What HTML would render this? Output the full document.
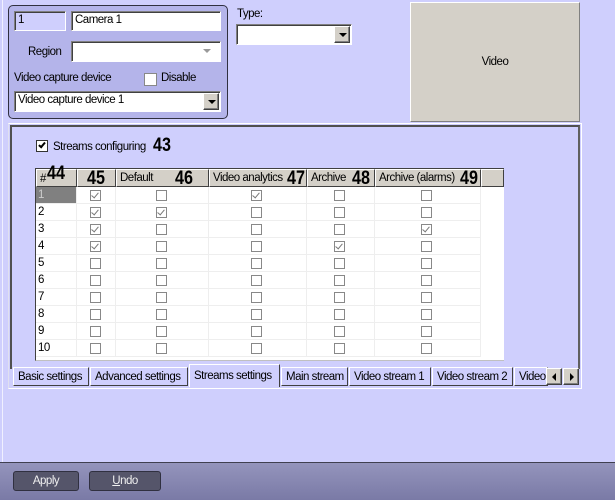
<!DOCTYPE html>
<html><head><style>
*{margin:0;padding:0;box-sizing:border-box}
body{width:615px;height:500px;background:#cfcffd;font-family:"Liberation Sans",sans-serif;font-size:11.5px;color:#000;position:relative;overflow:hidden;letter-spacing:-0.5px}
.a{position:absolute}
.edit{position:absolute;background:#fff;border-top:1px solid #808080;border-left:1px solid #808080;border-right:1px solid #fff;border-bottom:1px solid #fff;box-shadow:inset 1px 1px 0 #404040;padding:2px 3px;white-space:nowrap}
.btn{position:absolute;background:#d4d0c8;border:1px solid;border-color:#fff #404040 #404040 #fff;box-shadow:inset -1px -1px 0 #808080}
.tri{position:absolute;left:4px;top:6px;width:0;height:0;border-left:4px solid transparent;border-right:4px solid transparent;border-top:4px solid #000}
.cb{position:absolute;width:11px;height:11px;border:1px solid #888;background:#fff}
.cb.k::after{content:"";position:absolute;left:2px;top:0px;width:3px;height:6px;border:solid #777;border-width:0 1px 1px 0;transform:rotate(40deg)}
.big{font-weight:bold;font-size:19px;position:absolute;letter-spacing:0;transform:scaleX(0.85);transform-origin:left}
.hd{position:absolute;top:0;height:18px;background:#d4d0c8;border-right:1px solid #404040;border-bottom:1px solid #404040;border-left:1px solid #fff;border-top:1px solid #fff;padding:2px 3px;white-space:nowrap}
.tab{position:absolute;top:367px;height:19px;background:#cfcffd;border:1px solid;border-color:#fff #404040 #404040 #fff;padding:3px 4px;white-space:nowrap}
</style></head><body>
<div class="a" style="left:2px;top:0;width:1px;height:462px;background:#f0f0ff"></div>
<div class="a" style="left:8px;top:5px;width:220px;height:114px;background:#b4b4ea;border:1px solid #303040;border-radius:5px"></div>
<div class="edit" style="left:14px;top:11px;width:52px;height:20px;background:#cfcffd">1</div>
<div class="edit" style="left:71px;top:11px;width:150px;height:20px">Camera 1</div>
<div class="a" style="left:28px;top:46px">Region</div>
<div class="edit" style="left:71px;top:41px;width:150px;height:21px;background:#fff"></div>
<div class="a" style="left:203px;top:49px;width:0;height:0;border-left:4px solid transparent;border-right:4px solid transparent;border-top:4px solid #999"></div>
<div class="a" style="left:14px;top:72px">Video capture device</div>
<div class="cb" style="left:144px;top:73px;width:13px;height:13px"></div>
<div class="a" style="left:161px;top:72px">Disable</div>
<div class="edit" style="left:14px;top:91px;width:207px;height:21px">Video capture device 1</div>
<div class="btn" style="left:203px;top:93px;width:16px;height:17px"><div class="tri"></div></div>
<div class="a" style="left:237px;top:8px">Type:</div>
<div class="edit" style="left:236px;top:24px;width:116px;height:21px"></div>
<div class="btn" style="left:334px;top:26px;width:16px;height:17px"><div class="tri"></div></div>
<div class="a" style="left:410px;top:2px;width:170px;height:120px;background:#d4d0c8;border:1px solid;border-color:#fff #808080 #808080 #fff;text-align:center;line-height:118px">Video</div>
<div class="a" style="left:8px;top:123px;width:574px;height:266px;border:1px solid #fff;border-left-color:#e0e0f0"></div>
<div class="a" style="left:10px;top:125px;width:570px;height:244px;border:2px solid #505050;border-right-color:#606060;border-bottom:none"></div>
<div class="cb" style="left:36px;top:140px;width:12px;height:12px;border-color:#333"><div style="position:absolute;left:3px;top:0;width:4px;height:7px;border:solid #000;border-width:0 2px 2px 0;transform:rotate(40deg)"></div></div>
<div class="a" style="left:53px;top:141px">Streams configuring</div>
<div class="big" style="left:153px;top:135px">43</div>
<div class="a" style="left:35px;top:168px;width:469px;height:193px;background:#fff;border-left:1px solid #404040;border-top:1px solid #404040;border-bottom:1px solid #c0c0c0">
<div class="hd" style="left:0;width:41px;padding-top:3px">#<span class="big" style="left:10px;top:-7px">44</span></div>
<div class="hd" style="left:41px;width:39px"><span class="big" style="left:9px;top:-2px">45</span></div>
<div class="hd" style="left:80px;width:93px">Default<span class="big" style="left:58px;top:-2px">46</span></div>
<div class="hd" style="left:173px;width:98px">Video analytics<span class="big" style="left:77px;top:-2px">47</span></div>
<div class="hd" style="left:271px;width:68px">Archive<span class="big" style="left:44px;top:-2px">48</span></div>
<div class="hd" style="left:339px;width:106px">Archive (alarms)<span class="big" style="left:84px;top:-2px">49</span></div>
<div class="hd" style="left:445px;width:23px"></div>
</div>
<div class="a" style="left:36px;top:187px;width:40px;height:17px;background:#808080;color:#ccc;padding:2px 2px">1</div>
<script>
var ck=[[1,0,1,0,0],[1,1,0,0,0],[1,0,0,0,1],[1,0,0,1,0],[0,0,0,0,0],[0,0,0,0,0],[0,0,0,0,0],[0,0,0,0,0],[0,0,0,0,0],[0,0,0,0,0]];
var cx=[95,161,256,339,426];var lines=[76,115,208,306,374,480];var h="";
for(var i=0;i<10;i++){var y=187+i*17;
 if(i>0)h+='<div class="a" style="left:38px;top:'+(y+2)+'px">'+(i+1)+'</div>';
 h+='<div class="a" style="left:36px;top:'+(y+16)+'px;width:444px;height:1px;background:#eee"></div>';
 for(var j=0;j<5;j++)h+='<div class="cb'+(ck[i][j]?' k':'')+'" style="left:'+(cx[j]-5)+'px;top:'+(y+3)+'px;border-color:#888"></div>';}
for(var k=0;k<6;k++)h+='<div class="a" style="left:'+lines[k]+'px;top:187px;width:1px;height:170px;background:#eee"></div>';
document.write(h);
</script>
<div class="tab" style="left:13px;width:76px">Basic settings</div>
<div class="tab" style="left:90px;width:98px">Advanced settings</div>
<div class="tab" style="left:189px;top:364px;height:23px;width:91px;border-bottom:none;padding-top:5px">Streams settings</div>
<div class="tab" style="left:281px;width:67px">Main stream</div>
<div class="tab" style="left:349px;width:82px">Video stream 1</div>
<div class="tab" style="left:432px;width:81px">Video stream 2</div>
<div class="tab" style="left:514px;width:34px;overflow:hidden">Video</div>
<div class="btn" style="left:546px;top:368px;width:16px;height:17px"><div class="a" style="left:5px;top:4px;border-top:4px solid transparent;border-bottom:4px solid transparent;border-right:4px solid #000"></div></div>
<div class="btn" style="left:563px;top:368px;width:16px;height:17px"><div class="a" style="left:6px;top:4px;border-top:4px solid transparent;border-bottom:4px solid transparent;border-left:4px solid #000"></div></div>
<div class="a" style="left:0;top:462px;width:615px;height:38px;background:linear-gradient(#9494bc,#7a7aa6);border-top:1px solid #404050"></div>
<div class="a" style="left:13px;top:471px;width:66px;height:20px;background:#55556a;border:1px solid #303040;border-radius:3px;color:#f0f0f0;text-align:center;line-height:18px">Apply</div>
<div class="a" style="left:89px;top:471px;width:72px;height:20px;background:#55556a;border:1px solid #303040;border-radius:3px;color:#f0f0f0;text-align:center;line-height:18px"><u>U</u>ndo</div>
</body></html>
